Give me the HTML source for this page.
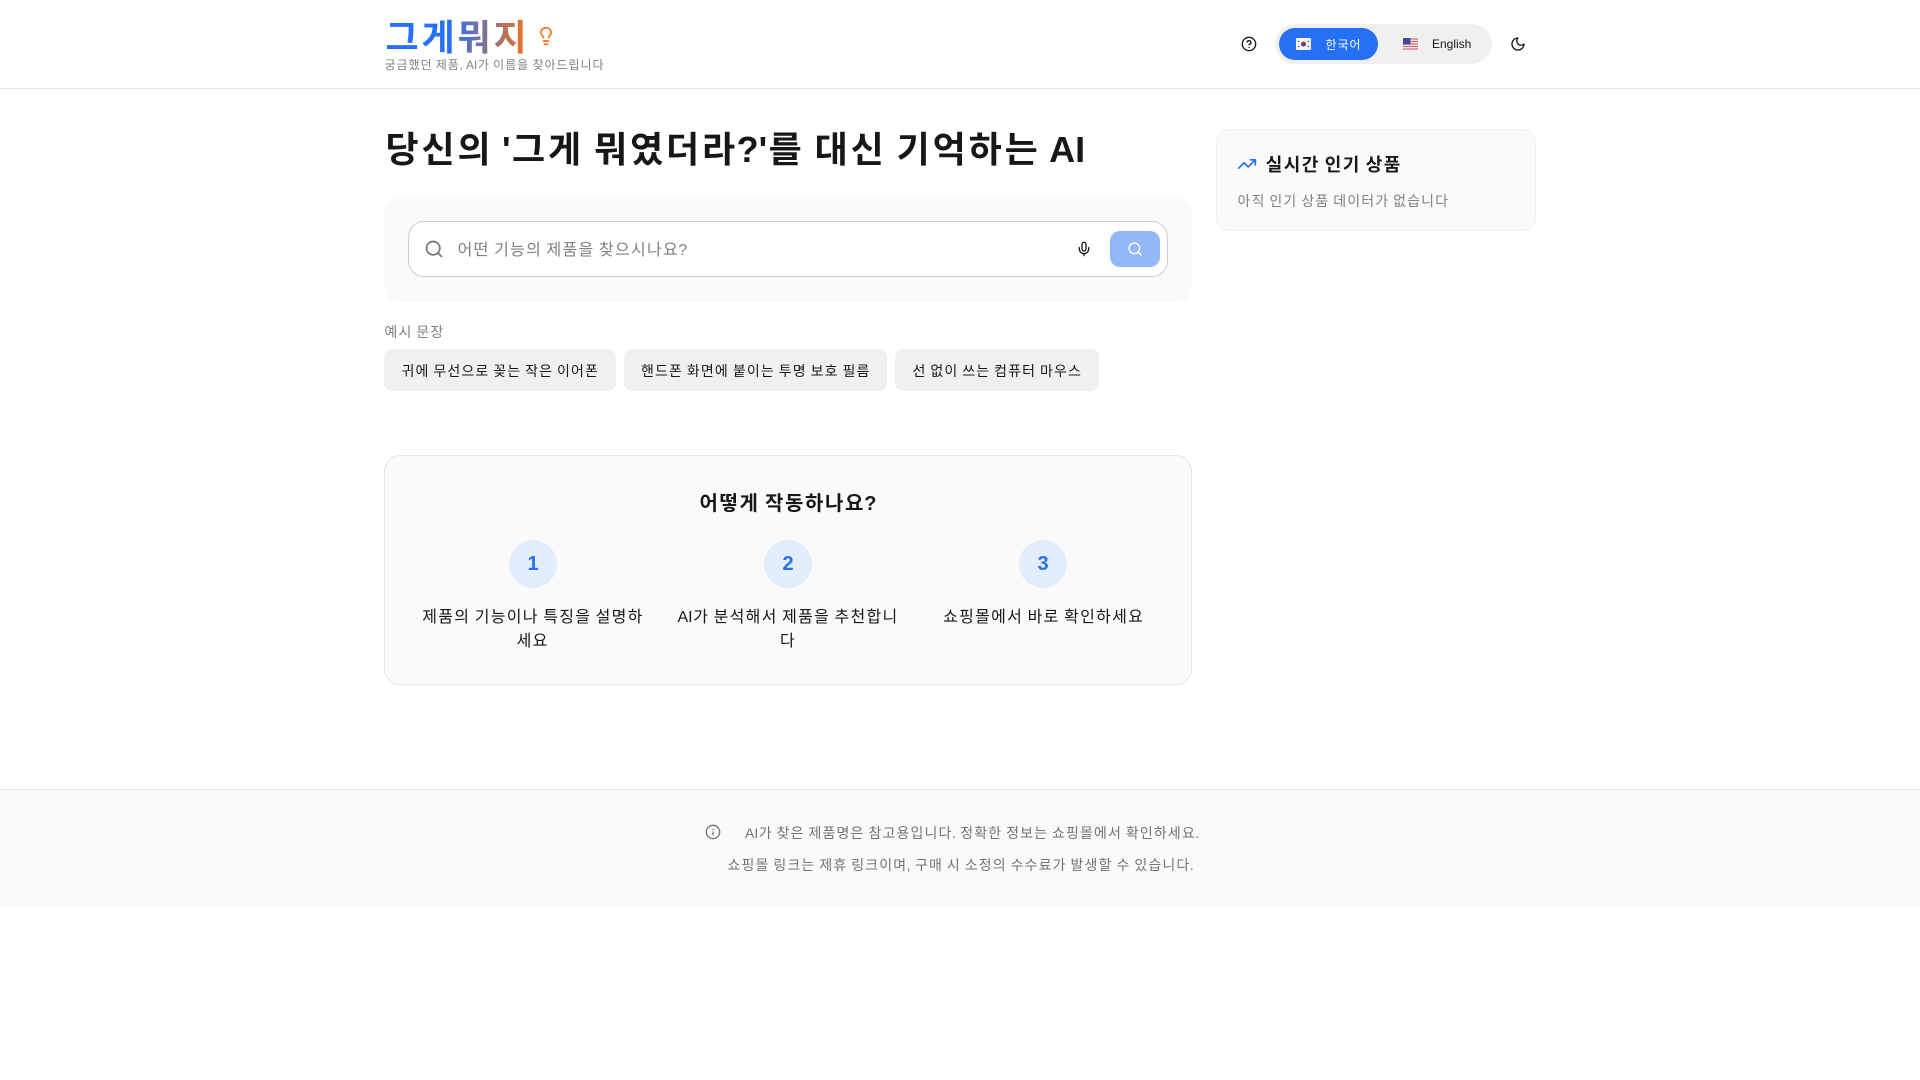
<!DOCTYPE html>
<html lang="ko">
<head>
<meta charset="utf-8">
<title>그게뭐지</title>
<style>
*{box-sizing:border-box;margin:0;padding:0;letter-spacing:.08em;word-spacing:-.08em;text-indent:.04em}
html,body{width:1920px;height:1080px;background:#fff;overflow:hidden}
body{position:relative;font-family:"Liberation Sans","Noto Sans CJK KR",sans-serif;color:#171717}
i{font-style:normal;letter-spacing:0;word-spacing:0;margin:0 .04em 0 -.04em}
.a{position:absolute;white-space:nowrap}
svg.i{position:absolute;fill:none;stroke:currentColor;stroke-width:2;stroke-linecap:round;stroke-linejoin:round}
.chip{position:absolute;top:349px;height:42px;line-height:44px;background:#f0f0f0;border-radius:8px;font-size:14px;text-align:center;color:#171717;white-space:nowrap}
.num{position:absolute;top:540px;width:48px;height:48px;border-radius:50%;background:#e4edfb;color:#2570f5;font-size:20px;font-weight:700;line-height:48px;text-align:center;letter-spacing:0;text-indent:0}
.step{position:absolute;top:606px;width:231.33px;font-size:16px;line-height:24px;text-align:center;color:#171717;word-break:break-all}
</style>
</head>
<body>
<!-- header -->
<div class="a" style="left:0;top:88px;width:1920px;height:1px;background:#e5e5e5"></div>
<div class="a" style="left:384px;top:18px;width:146px;height:40px;font-size:36px;line-height:40px;font-weight:700;color:transparent;background:linear-gradient(to right,#2570f5 45%,#f97316 100%);-webkit-background-clip:text;background-clip:text">그게뭐지</div>
<svg class="i" style="left:536px;top:26px;color:#f97316" width="20" height="20" viewBox="0 0 24 24"><path d="M15 14c.2-1 .7-1.7 1.5-2.5 1-.9 1.5-2.2 1.5-3.5A6 6 0 0 0 6 8c0 1 .2 2.2 1.5 3.5.7.7 1.3 1.5 1.5 2.5"/><path d="M9 18h6"/><path d="M10 22h4"/></svg>
<div class="a" style="left:384px;top:57px;font-size:12px;line-height:16px;color:#808080">궁금했던 제품<i>,</i> <i>AI</i>가 이름을 찾아드립니다</div>

<svg class="i" style="left:1241px;top:36px;color:#171717" width="16" height="16" viewBox="0 0 24 24"><circle cx="12" cy="12" r="10"/><path d="M9.09 9a3 3 0 0 1 5.83 1c0 2-3 3-3 3"/><path d="M12 17h.01"/></svg>
<div class="a" style="left:1275px;top:24px;width:217px;height:40px;border-radius:20px;background:#f0f0f0"></div>
<div class="a" style="left:1279px;top:28px;width:99px;height:32px;border-radius:16px;background:#2570f5"></div>
<svg class="a" style="left:1296px;top:38px" width="15" height="12" viewBox="0 0 15 12"><rect width="15" height="12" rx="1" fill="#f4f4f4"/><path d="M5 6a2.500 2.500 0 0 1 5 0z" fill="#d23040"/><path d="M5 6a2.500 2.500 0 0 0 5 0z" fill="#2a4a9c"/><path d="M2 3l1.500 1M2 9l1.500-1M13 3l-1.500 1M13 9l-1.500-1" stroke="#555" stroke-width="1"/></svg>
<div class="a" style="left:1325px;top:37px;font-size:12px;line-height:16px;color:#fff">한국어</div>
<svg class="a" style="left:1403px;top:38px" width="15" height="12" viewBox="0 0 15 12"><rect width="15" height="12" rx="1" fill="#f5f0f0"/><path d="M0 1h15M0 3.500h15M0 6h15M0 8.500h15M0 11h15" stroke="#d96a78" stroke-width="1.200"/><rect width="7.500" height="6.500" fill="#3d4f90"/></svg>
<div class="a" style="left:1432px;top:36px;font-size:12px;line-height:16px;color:#171717"><i>English</i></div>
<svg class="i" style="left:1510px;top:36px;color:#171717" width="16" height="16" viewBox="0 0 24 24"><path d="M12 3a6 6 0 0 0 9 9 9 9 0 1 1-9-9Z"/></svg>

<!-- heading -->
<div class="a" style="left:384px;top:126px;font-size:36px;line-height:48px;font-weight:700;color:#171717">당신의 <i>'</i>그게 뭐였더라<i>?'</i>를 대신 기억하는 <i>AI</i></div>

<!-- search -->
<div class="a" style="left:384px;top:197px;width:808px;height:105px;border-radius:16px;background:#fafafa"></div>
<div class="a" style="left:408px;top:221px;width:760px;height:56px;border-radius:16px;background:#fff;border:1px solid #cfcfcf"></div>
<svg class="i" style="left:424px;top:239px;color:#737373" width="20" height="20" viewBox="0 0 24 24"><circle cx="11" cy="11" r="8"/><path d="m21 21-4.300-4.300"/></svg>
<div class="a" style="left:457px;top:239px;font-size:16px;line-height:24px;color:#808080">어떤 기능의 제품을 찾으시나요<i>?</i></div>
<svg class="i" style="left:1076px;top:241px;color:#171717" width="16" height="16" viewBox="0 0 24 24"><path d="M12 2a3 3 0 0 0-3 3v7a3 3 0 0 0 6 0V5a3 3 0 0 0-3-3Z"/><path d="M19 10v2a7 7 0 0 1-14 0v-2"/><path d="M12 19v3"/></svg>
<div class="a" style="left:1110px;top:231px;width:50px;height:36px;border-radius:10px;background:#92b8fa"></div>
<svg class="i" style="left:1127px;top:241px;color:#fff" width="16" height="16" viewBox="0 0 24 24"><circle cx="11" cy="11" r="8"/><path d="m21 21-4.300-4.300"/></svg>

<!-- examples -->
<div class="a" style="left:384px;top:322px;font-size:14px;line-height:20px;color:#808080">예시 문장</div>
<div class="chip" style="left:384px;width:232px">귀에 무선으로 꽂는 작은 이어폰</div>
<div class="chip" style="left:624px;width:263px">핸드폰 화면에 붙이는 투명 보호 필름</div>
<div class="chip" style="left:895px;width:204px">선 없이 쓰는 컴퓨터 마우스</div>

<!-- how it works -->
<div class="a" style="left:384px;top:455px;width:808px;height:230px;border-radius:16px;background:#fafafa;border:1px solid #e8e8e8"></div>
<div class="a" style="left:384px;top:490px;width:808px;text-align:center;font-size:20px;line-height:28px;font-weight:700;color:#171717">어떻게 작동하나요<i>?</i></div>
<div class="num" style="left:509px">1</div>
<div class="num" style="left:764px">2</div>
<div class="num" style="left:1019px">3</div>
<div class="step" style="left:417px">제품의 기능이나 특징을 설명하세요</div>
<div class="step" style="left:672.330px"><i>AI</i>가 분석해서 제품을 추천합니다</div>
<div class="step" style="left:927.670px">쇼핑몰에서 바로 확인하세요</div>

<!-- sidebar -->
<div class="a" style="left:1216px;top:129px;width:320px;height:102px;border-radius:14px;background:#fafafa;border:1px solid #f0f0f0"></div>
<svg class="i" style="left:1237px;top:154px;color:#2570f5" width="20" height="20" viewBox="0 0 24 24"><path d="M22 7l-8.500 8.500-5-5L2 17"/><path d="M16 7h6v6"/></svg>
<div class="a" style="left:1265px;top:152px;font-size:18px;line-height:26px;font-weight:700;color:#171717">실시간 인기 상품</div>
<div class="a" style="left:1237px;top:191px;font-size:14px;line-height:20px;color:#808080">아직 인기 상품 데이터가 없습니다</div>

<!-- footer -->
<div class="a" style="left:0;top:789px;width:1920px;height:117px;background:#fafafa;border-top:1px solid #e5e5e5"></div>
<svg class="i" style="left:705px;top:824px;color:#737373" width="16" height="16" viewBox="0 0 24 24"><circle cx="12" cy="12" r="10"/><path d="M12 16v-4"/><path d="M12 8h.01"/></svg>
<div class="a" style="left:745px;top:823px;font-size:14px;line-height:20px;color:#737373"><i>AI</i>가 찾은 제품명은 참고용입니다<i>.</i> 정확한 정보는 쇼핑몰에서 확인하세요<i>.</i></div>
<div class="a" style="left:727px;top:855px;font-size:14px;line-height:20px;color:#737373">쇼핑몰 링크는 제휴 링크이며<i>,</i> 구매 시 소정의 수수료가 발생할 수 있습니다<i>.</i></div>
</body>
</html>
